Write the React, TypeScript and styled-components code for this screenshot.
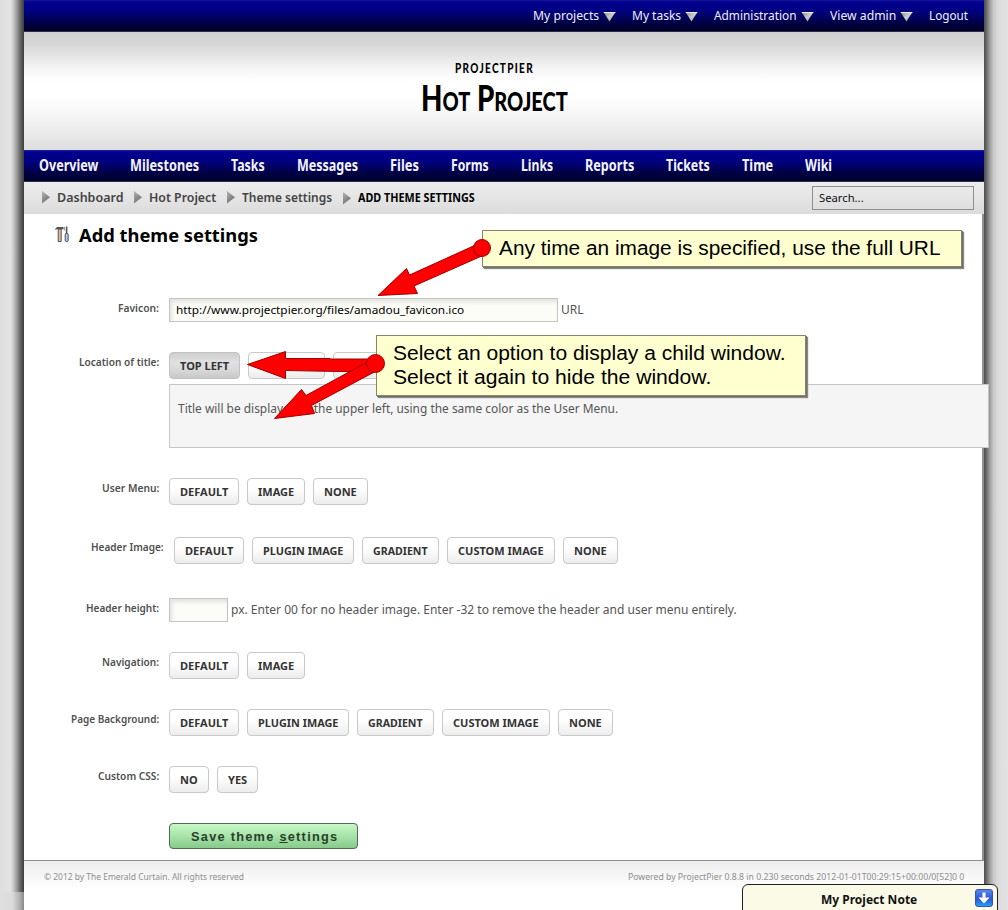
import React, { useLayoutEffect, useRef, useState } from "react";
import styled, { createGlobalStyle } from "styled-components";

const GlobalStyle = createGlobalStyle`
  *, *::before, *::after { box-sizing: border-box; }
  html, body { margin: 0; padding: 0; overflow: hidden; }
  body {
    font-family: "Noto Sans", "Open Sans", sans-serif;
    font-size: 12px;
    color: #555;
    background: #e2e2e2;
  }
`;

/* ---------- text set to a measured width ---------- */

const FitBox = styled.span<{ $w: number }>`
  display: inline-block;
  flex: none;
  width: ${(p) => p.$w}px;
  white-space: nowrap;
`;

const FitInner = styled.span`
  display: inline-block;
  transform-origin: 0 50%;
`;

function Fit({ w, children }: { w: number; children: React.ReactNode }) {
  const ref = useRef<HTMLSpanElement>(null);
  const [scale, setScale] = useState(1);
  useLayoutEffect(() => {
    if (ref.current) setScale(w / ref.current.offsetWidth);
  }, [w]);
  return (
    <FitBox $w={w}>
      <FitInner ref={ref} style={{ transform: `scaleX(${scale})` }}>
        {children}
      </FitInner>
    </FitBox>
  );
}

/* ---------- page frame ---------- */

const Page = styled.div`
  position: relative;
  display: grid;
  grid-template-columns: 24px 960px 24px;
  width: 1008px;
  height: 910px;
  overflow: hidden;
`;

const LeftGutter = styled.div`
  background: linear-gradient(to right, #dfdfdf 0, #e3e3e3 10px, #d8d8d8 12px, #b4b4b4 15px, #8a8a8a 18px, #5e5e5e 21px, #3c3c3c 24px);
  &::after {
    content: "";
    display: block;
    height: 18px;
    margin-top: 892px;
    background: linear-gradient(to right, #dedede 0, #dcdcdc 12px, #b5b5b5 19px, #898989 24px);
  }
`;

const RightGutter = styled.div`
  background: linear-gradient(to right, #4c4c4c 0, #727272 3px, #a0a0a0 6px, #c4c4c4 9px, #d9d9d9 13px, #dfdfdf 17px, #e3e3e3 24px);
`;

const Shell = styled.div`
  position: relative;
  z-index: 1;
  display: flex;
  flex-direction: column;
  background: #fff;
`;

const TopBar = styled.div`
  display: flex;
  justify-content: flex-end;
  gap: 16px;
  height: 32px;
  padding-right: 16px;
  line-height: 31px;
  color: #eef;
  background: linear-gradient(#1a1a9c 0, #00008e 2px, #000084 10px, #000040 24px, #00002a 31px, #55556a 32px);
`;

const MenuItem = styled.div`
  display: flex;
  align-items: center;
  gap: 4px;
  height: 31px;

  svg { margin-top: 2px; }
`;

const Header = styled.header`
  display: flex;
  flex-direction: column;
  align-items: center;
  height: 118px;
  padding-top: 26px;
  padding-right: 20px;
  font-family: Lato, sans-serif;
  color: #000;
  background: linear-gradient(#d0d0d0 0, #d6d6d6 12px, #f6f6f6 38px, #fff 50px, #fff 66px, #f4f4f4 86px, #dedede 118px);
`;

const Company = styled.div`
  height: 20px;
  line-height: 20px;
  font-size: 13.5px;
  font-weight: 900;
  letter-spacing: 1.8px;
`;

const ProjectName = styled.div`
  display: flex;
  align-items: baseline;
  height: 40px;
  line-height: 38px;
  font-size: 36px;
  font-weight: 900;
  small { font-size: 26px; }
`;

const Nav = styled.nav`
  display: flex;
  gap: 32px;
  height: 32px;
  padding-left: 15px;
  line-height: 31px;
  font-size: 16px;
  font-weight: 700;
  color: #f4f4ff;
  background: linear-gradient(#2020a0 0, #00008e 2px, #000084 10px, #000040 24px, #00002a 31px, #55556a 32px);
`;

const CrumbBar = styled.div`
  display: flex;
  align-items: center;
  justify-content: space-between;
  height: 32px;
  padding: 0 10px 0 18px;
  background: linear-gradient(#ededed, #dcdcdc);
`;

const Crumbs = styled.div`
  display: flex;
  gap: 11px;
`;

const Crumb = styled.span<{ $current?: boolean }>`
  display: flex;
  align-items: center;
  gap: 7px;
  height: 32px;
  padding-bottom: ${(p) => (p.$current ? 1 : 2)}px;
  font-weight: ${(p) => (p.$current ? 700 : 600)};
  font-size: ${(p) => (p.$current ? 11.5 : 12.5)}px;
  color: ${(p) => (p.$current ? "#000" : "#444")};
`;

const SearchBox = styled.div`
  width: 162px;
  height: 24px;
  padding-left: 6px;
  border: 1px solid #8f8f8f;
  line-height: 22px;
  font-size: 11px;
  color: #111;
`;

/* ---------- form ---------- */

const Content = styled.main`
  height: 646px;
  border-right: 2px solid #8e8e8e;
  padding: 6px 0 0 30px;
`;

const Heading = styled.h1`
  display: flex;
  align-items: center;
  gap: 9px;
  height: 28px;
  margin: 0 0 50px;
  font-size: 18.5px;
  font-weight: 700;
  color: #000;
`;

const Row = styled.div<{ $height: number; $shift?: number }>`
  display: flex;
  height: ${(p) => p.$height}px;
  padding-left: ${(p) => p.$shift ?? 0}px;
`;

const Label = styled.div`
  flex: none;
  width: 105px;
  height: 20px;
  margin-right: 10px;
  text-align: right;
  line-height: 20px;
  font-size: 11px;
  font-weight: 600;
  color: #505050;
`;

const Field = styled.div`
  flex: none;
`;

const Buttons = styled.div`
  display: flex;
  gap: 8px;
`;

const Inline = styled.div`
  display: flex;
  gap: 3px;
  line-height: 24px;
`;

const OptionButton = styled.div<{ $width: number; $active?: boolean }>`
  width: ${(p) => p.$width}px;
  height: 27px;
  padding-left: 10px;
  border: 1px solid ${(p) => (p.$active ? "#c2c2c2" : "#c9c9c9")};
  border-radius: 4px;
  line-height: 26px;
  font-size: 11px;
  font-weight: 700;
  color: #333;
  background: ${(p) => (p.$active ? "linear-gradient(#cecece, #e0e0e0 35%, #dadada 65%, #c8c8c8)" : "linear-gradient(#fff 40%, #ececec)")};
`;

const TextInput = styled.div<{ $width: number }>`
  width: ${(p) => p.$width}px;
  height: 24px;
  padding-left: 6px;
  border: 1px solid #c4c4c4;
  background: #fdfdf8;
  box-shadow: inset 2px 3px 4px #e2e2de;
  line-height: 22px;
  font-size: 11px;
  color: #000;
`;

const ChildPanel = styled.div`
  width: 820px;
  height: 64px;
  margin-top: 5px;
  padding: 14px 8px;
  border: 1px solid #c6c6c6;
  background: #f5f5f5;
  line-height: 20px;
`;

const SaveButton = styled.div`
  width: 189px;
  height: 26px;
  padding-left: 21px;
  border: 1px solid #4f6b52;
  border-radius: 4px;
  line-height: 25px;
  font-family: "Liberation Sans", Arial, sans-serif;
  font-size: 13px;
  font-weight: 700;
  letter-spacing: 1.3px;
  color: #26402a;
  background: linear-gradient(#c8f8c8, #a8e3aa 50%, #86cb8a);
`;

const Footer = styled.footer`
  display: flex;
  justify-content: space-between;
  height: 50px;
  padding: 6px 20px 0;
  border-top: 1px solid #8e8e8e;
  line-height: 20px;
  font-size: 9px;
  color: #8e8e8e;
  background: linear-gradient(#ededed, #fff 28px);
`;

/* ---------- overlays ---------- */

const Callout = styled.div<{ $x: number; $y: number; $w: number; $h: number }>`
  position: absolute;
  z-index: 2;
  left: ${(p) => p.$x}px;
  top: ${(p) => p.$y}px;
  width: ${(p) => p.$w}px;
  height: ${(p) => p.$h}px;
  display: flex;
  flex-direction: column;
  padding: 5px 16px;
  border: 1px solid #85856c;
  background: #ffffcf;
  box-shadow: 1px 1px 0 #707068, 2px 2px 1px #8a8a8a;
  font-family: "Liberation Sans", Arial, sans-serif;
  font-size: 20px;
  line-height: 24px;
  color: #000;
`;

const Arrows = styled.svg`
  position: absolute;
  z-index: 3;
  left: 0;
  top: 0;
  pointer-events: none;
`;

const Note = styled.div`
  position: absolute;
  z-index: 2;
  left: 742px;
  top: 884px;
  width: 256px;
  height: 30px;
  display: flex;
  justify-content: flex-end;
  gap: 58px;
  padding: 4px 4px 0 0;
  border: 1px solid #222;
  border-radius: 6px 6px 0 0;
  background: #fafae6;
  line-height: 20px;
  font-size: 13px;
  font-weight: 700;
  color: #111;
`;

/* ---------- icons ---------- */

const DownTriangle = () => (
  <svg width="13" height="11" viewBox="0 0 13 11">
    <defs>
      <linearGradient id="down" x1="0" y1="0" x2="1" y2="1">
        <stop offset="0" stopColor="#777" />
        <stop offset="0.5" stopColor="#ccc" />
        <stop offset="1" stopColor="#888" />
      </linearGradient>
    </defs>
    <path d="M0.5 1 H12.5 L6.5 10.5 Z" fill="url(#down)" />
    <path d="M0.5 1 H12.5 L12 2.3 H1.2 Z" fill="#e8e8e8" />
  </svg>
);

const RightTriangle = () => (
  <svg width="8" height="14" viewBox="0 0 8 14">
    <defs>
      <linearGradient id="right" x1="0" y1="0" x2="0.6" y2="1">
        <stop offset="0" stopColor="#b5b5b5" />
        <stop offset="1" stopColor="#6c6c6c" />
      </linearGradient>
    </defs>
    <path d="M0 1 L8 7.2 L0 13.5 Z" fill="url(#right)" />
  </svg>
);

const ToolsIcon = () => (
  <svg width="16" height="18" viewBox="0 0 16 18">
    <path d="M1 5 C1.5 2.5 3 2 5 2 H9.5 V4.2 H3.5 C2.3 4.2 1.8 4.6 1 5 Z" fill="#555" />
    <path d="M4.2 4 H7.2 V16.5 H4.2 Z" fill="#d9b8a5" stroke="#54443c" strokeWidth="0.9" />
    <path d="M12.6 1.5 V9" stroke="#555" strokeWidth="1.6" />
    <path d="M10.3 2 V5.5" stroke="#888" strokeWidth="1" />
    <rect x="11.2" y="8.5" width="3" height="8" rx="1.2" fill="#b9c9de" stroke="#34435a" strokeWidth="0.9" />
  </svg>
);

const NoteIcon = () => (
  <svg width="18" height="18" viewBox="0 0 18 18">
    <defs>
      <linearGradient id="note" x1="0" y1="0" x2="0" y2="1">
        <stop offset="0" stopColor="#5b8bea" />
        <stop offset="0.55" stopColor="#2b56d4" />
        <stop offset="1" stopColor="#24a4f2" />
      </linearGradient>
    </defs>
    <rect x="0.5" y="0.5" width="17" height="17" rx="2.5" fill="url(#note)" stroke="#3b50b8" />
    <path d="M7.5 3.5 H10.5 V8.6 H14.6 L9 14.4 L3.4 8.6 H7.5 Z" fill="#fff" />
  </svg>
);

/* ---------- data ---------- */

type Item = [string, number];

const menu: Item[] = [["My projects", 66], ["My tasks", 49], ["Administration", 83], ["View admin", 66]];

const tabs: Item[] = [
  ["Overview", 59], ["Milestones", 69], ["Tasks", 34], ["Messages", 61], ["Files", 29], ["Forms", 38],
  ["Links", 32], ["Reports", 49], ["Tickets", 44], ["Time", 31], ["Wiki", 27],
];

const crumbs: Item[] = [["Dashboard", 66], ["Hot Project", 67], ["Theme settings", 90]];

const optionWidths: Record<string, number> = {
  DEFAULT: 70, IMAGE: 58, NONE: 55, "PLUGIN IMAGE": 102, GRADIENT: 77, "CUSTOM IMAGE": 108, NO: 40, YES: 41,
};

const imageOptions = ["DEFAULT", "PLUGIN IMAGE", "GRADIENT", "CUSTOM IMAGE", "NONE"];

function FormRow(props: { label: string; labelWidth: number; height: number; shift?: number; children: React.ReactNode }) {
  return (
    <Row $height={props.height} $shift={props.shift}>
      <Label>
        <Fit w={props.labelWidth}>{props.label}</Fit>
      </Label>
      <Field>{props.children}</Field>
    </Row>
  );
}

function Options({ names }: { names: string[] }) {
  return (
    <Buttons>
      {names.map((name) => (
        <OptionButton key={name} $width={optionWidths[name]}>
          <Fit w={optionWidths[name] - 22}>{name}</Fit>
        </OptionButton>
      ))}
    </Buttons>
  );
}

export default function App() {
  return (
    <>
      <GlobalStyle />
      <Page>
        <LeftGutter />
        <Shell>
          <TopBar>
            {menu.map(([name, w]) => (
              <MenuItem key={name}>
                <Fit w={w}>{name}</Fit>
                <DownTriangle />
              </MenuItem>
            ))}
            <MenuItem>
              <Fit w={39}>Logout</Fit>
            </MenuItem>
          </TopBar>
          <Header>
            <Company>
              <Fit w={79}>PROJECTPIER</Fit>
            </Company>
            <ProjectName>
              <Fit w={147}>
                H<small>OT</small> P<small>ROJECT</small>
              </Fit>
            </ProjectName>
          </Header>
          <Nav>
            {tabs.map(([name, w]) => (
              <Fit key={name} w={w}>{name}</Fit>
            ))}
          </Nav>
          <CrumbBar>
            <Crumbs>
              {crumbs.map(([name, w]) => (
                <Crumb key={name}>
                  <RightTriangle />
                  <Fit w={w}>{name}</Fit>
                </Crumb>
              ))}
              <Crumb $current>
                <RightTriangle />
                <Fit w={117}>ADD THEME SETTINGS</Fit>
              </Crumb>
            </Crumbs>
            <SearchBox>
              <Fit w={45}>Search...</Fit>
            </SearchBox>
          </CrumbBar>
          <Content>
            <Heading>
              <ToolsIcon />
              <Fit w={179}>Add theme settings</Fit>
            </Heading>
            <FormRow label="Favicon:" labelWidth={41} height={54}>
              <Inline>
                <TextInput $width={389}>
                  <Fit w={288}>http://www.projectpier.org/files/amadou_favicon.ico</Fit>
                </TextInput>
                <Fit w={23}>URL</Fit>
              </Inline>
            </FormRow>
            <FormRow label="Location of title:" labelWidth={80} height={126}>
              <Buttons>
                <OptionButton $width={71} $active>
                  <Fit w={49}>TOP LEFT</Fit>
                </OptionButton>
                <OptionButton $width={77} />
                <OptionButton $width={77} />
              </Buttons>
              <ChildPanel>
                <Fit w={440}>Title will be displayed in the upper left, using the same color as the User Menu.</Fit>
              </ChildPanel>
            </FormRow>
            <FormRow label="User Menu:" labelWidth={57} height={59}>
              <Options names={["DEFAULT", "IMAGE", "NONE"]} />
            </FormRow>
            <FormRow label="Header Image:" labelWidth={73} height={61} shift={5}>
              <Options names={imageOptions} />
            </FormRow>
            <FormRow label="Header height:" labelWidth={73} height={54}>
              <Inline>
                <TextInput $width={59} />
                <Fit w={506}>px. Enter 00 for no header image. Enter -32 to remove the header and user menu entirely.</Fit>
              </Inline>
            </FormRow>
            <FormRow label="Navigation:" labelWidth={57} height={57}>
              <Options names={["DEFAULT", "IMAGE"]} />
            </FormRow>
            <FormRow label="Page Background:" labelWidth={88} height={57}>
              <Options names={imageOptions} />
            </FormRow>
            <FormRow label="Custom CSS:" labelWidth={61} height={57}>
              <Options names={["NO", "YES"]} />
            </FormRow>
            <Row $height={26} $shift={115}>
              <SaveButton>
                <Fit w={147}>
                  Save theme <u>s</u>ettings
                </Fit>
              </SaveButton>
            </Row>
          </Content>
          <Footer>
            <Fit w={200}>© 2012 by The Emerald Curtain. All rights reserved</Fit>
            <Fit w={336}>Powered by ProjectPier 0.8.8 in 0.230 seconds 2012-01-01T00:29:15+00:00/0[52]0 0</Fit>
          </Footer>
        </Shell>
        <RightGutter />

        <Callout $x={482} $y={230} $w={480} $h={37}>
          <Fit w={442}>Any time an image is specified, use the full URL</Fit>
        </Callout>
        <Callout $x={376} $y={335} $w={430} $h={61}>
          <Fit w={393}>Select an option to display a child window.</Fit>
          <Fit w={318}>Select it again to hide the window.</Fit>
        </Callout>

        <Arrows width="1008" height="910" viewBox="0 0 1008 910" fill="#fe0000" stroke="#a00000" strokeWidth="1">
          <path d="M480 243 L409.5 275 L406.5 268.5 L378 295.5 L417.5 293.5 L414 286 L484 255 Z" />
          <circle cx="482" cy="248" r="8.5" />
          <path d="M376 359 L330 359 L330 358.5 L285.5 358.5 L285.5 351.5 L247.5 364.5 L285.5 378.5 L285.5 370.5 L340 371.5 L376 371.5 Z" />
          <path d="M370 360.5 L306 395.5 L301.5 389.5 L274.5 418.5 L314.5 413.5 L311.5 405.5 L379 369.5 Z" />
          <circle cx="375.5" cy="363.5" r="9" />
        </Arrows>

        <Note>
          <Fit w={96}>My Project Note</Fit>
          <NoteIcon />
        </Note>
      </Page>
    </>
  );
}
